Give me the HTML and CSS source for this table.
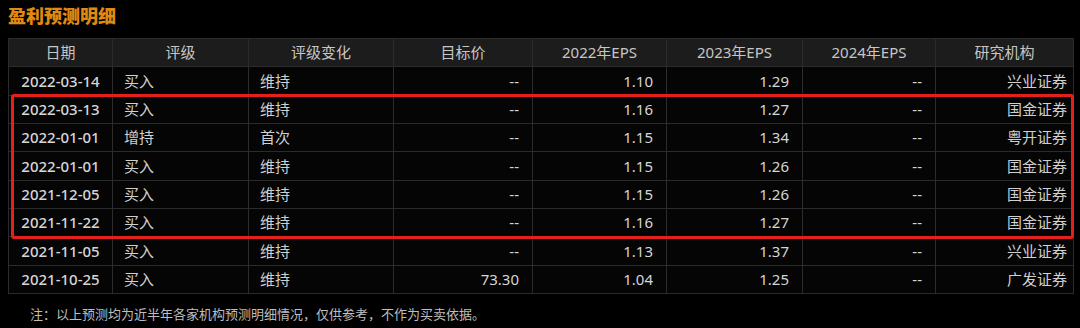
FILE: index.html
```html
<!DOCTYPE html>
<html lang="zh">
<head>
<meta charset="utf-8">
<link rel="stylesheet" href="styles.css">
</head>
<body>
<div class="page">
  <h1 class="title">盈利预测明细</h1>
  <div class="table-wrap">
    <table class="grid">
      <colgroup>
        <col class="c1"><col class="c2"><col class="c3"><col class="c4"><col class="c5"><col class="c6"><col class="c7"><col class="c8">
      </colgroup>
      <thead>
        <tr><th>日期</th><th>评级</th><th>评级变化</th><th>目标价</th><th>2022年EPS</th><th>2023年EPS</th><th>2024年EPS</th><th>研究机构</th></tr>
      </thead>
      <tbody>
        <tr><td class="date">2022-03-14</td><td class="txt">买入</td><td class="txt">维持</td><td class="num">--</td><td class="num">1.10</td><td class="num">1.29</td><td class="num">--</td><td class="org">兴业证券</td></tr>
        <tr><td class="date">2022-03-13</td><td class="txt">买入</td><td class="txt">维持</td><td class="num">--</td><td class="num">1.16</td><td class="num">1.27</td><td class="num">--</td><td class="org">国金证券</td></tr>
        <tr><td class="date">2022-01-01</td><td class="txt">增持</td><td class="txt">首次</td><td class="num">--</td><td class="num">1.15</td><td class="num">1.34</td><td class="num">--</td><td class="org">粤开证券</td></tr>
        <tr><td class="date">2022-01-01</td><td class="txt">买入</td><td class="txt">维持</td><td class="num">--</td><td class="num">1.15</td><td class="num">1.26</td><td class="num">--</td><td class="org">国金证券</td></tr>
        <tr><td class="date">2021-12-05</td><td class="txt">买入</td><td class="txt">维持</td><td class="num">--</td><td class="num">1.15</td><td class="num">1.26</td><td class="num">--</td><td class="org">国金证券</td></tr>
        <tr><td class="date">2021-11-22</td><td class="txt">买入</td><td class="txt">维持</td><td class="num">--</td><td class="num">1.16</td><td class="num">1.27</td><td class="num">--</td><td class="org">国金证券</td></tr>
        <tr><td class="date">2021-11-05</td><td class="txt">买入</td><td class="txt">维持</td><td class="num">--</td><td class="num">1.13</td><td class="num">1.37</td><td class="num">--</td><td class="org">兴业证券</td></tr>
        <tr><td class="date">2021-10-25</td><td class="txt">买入</td><td class="txt">维持</td><td class="num">73.30</td><td class="num">1.04</td><td class="num">1.25</td><td class="num">--</td><td class="org">广发证券</td></tr>
      </tbody>
    </table>
    <div class="highlight"></div>
  </div>
  <p class="note">注：以上预测均为近半年各家机构预测明细情况，仅供参考，不作为买卖依据。</p>
</div>
</body>
</html>
```

FILE: styles.css
```css
html, body {
  margin: 0;
  padding: 0;
  background: #000;
}
body {
  width: 1080px;
  height: 328px;
  overflow: hidden;
  font-family: "Noto Sans", "Noto Sans CJK SC", sans-serif;
  color: #d2d2d2;
}
.page {
  padding: 0 0 0 8px;
}
.title {
  margin: 0;
  height: 38px;
  line-height: 31px;
  font-family: "Noto Sans CJK SC", sans-serif;
  font-size: 18px;
  font-weight: 900;
  color: #e08a12;
  letter-spacing: 0;
}
.table-wrap {
  position: relative;
  width: 1065px;
}
.grid {
  border-collapse: collapse;
  table-layout: fixed;
  width: 1065px;
  font-size: 15px;
}
.c1 { width: 104px; }
.c2 { width: 136px; }
.c3 { width: 145px; }
.c4 { width: 139px; }
.c5 { width: 134px; }
.c6 { width: 136px; }
.c7 { width: 133px; }
.c8 { width: 138px; }
.grid th, .grid td {
  border: 1px solid #2b2b2b;
  height: 27.35px;
  padding: 0;
  line-height: 27px;
  white-space: nowrap;
  overflow: hidden;
}
.grid th {
  background: #1c1c1c;
  color: #c6c6c6;
  font-weight: 400;
  text-align: center;
}
.grid td {
  background: #050505;
}
.grid td.date {
  text-align: center;
  font-weight: 500;
  color: #d6d6d6;
}
.grid td.txt {
  text-align: left;
  padding-left: 11px;
  color: #d0d0d0;
}
.grid td.num {
  text-align: right;
  padding-right: 13px;
  color: #d6d6d6;
}
.grid td.org {
  text-align: right;
  padding-right: 6px;
  color: #d0d0d0;
}
.highlight {
  position: absolute;
  left: 3px;
  top: 56px;
  width: 1057px;
  height: 139px;
  border: 3px solid #e3201c;
  border-radius: 3px;
  pointer-events: none;
}
.note {
  margin: 11px 0 0 22px;
  font-family: "Noto Sans CJK SC", sans-serif;
  font-size: 13px;
  line-height: 18px;
  color: #bdbdbd;
}
```
